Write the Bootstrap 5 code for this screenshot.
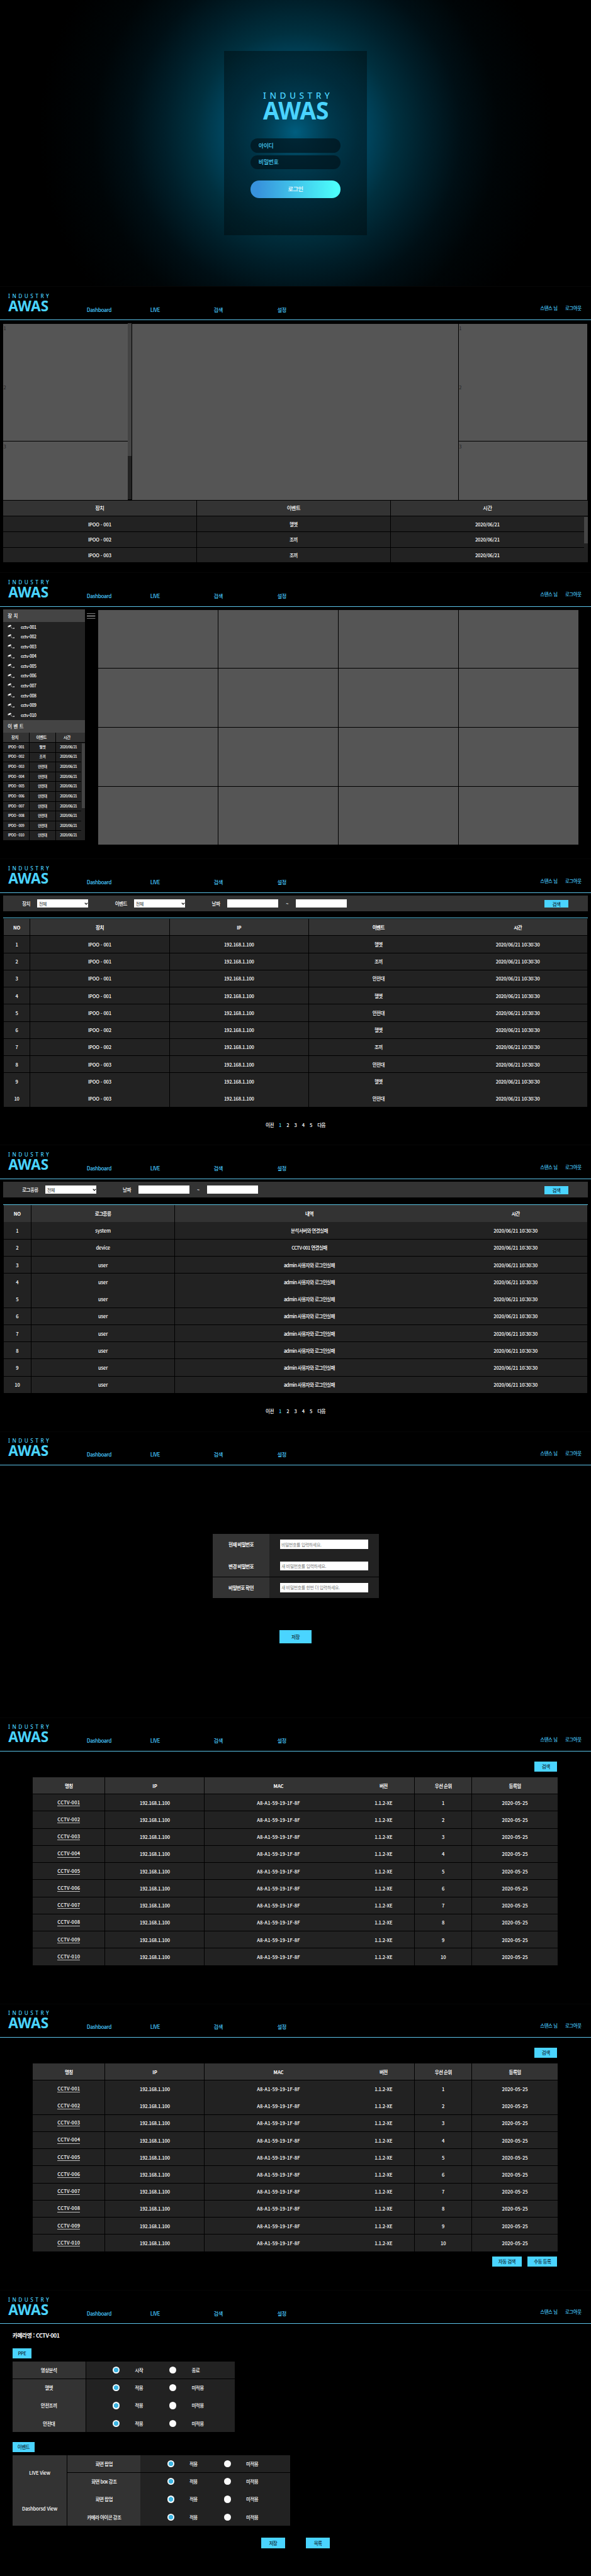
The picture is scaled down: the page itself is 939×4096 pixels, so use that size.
<!DOCTYPE html>
<html lang="ko">
<head>
<meta charset="utf-8">
<meta name="viewport" content="width=device-width, initial-scale=1">
<title>INDUSTRY AWAS</title>
<link href="https://cdn.jsdelivr.net/npm/bootstrap@5.3.0/dist/css/bootstrap.min.css" rel="stylesheet">
<style>
  /* 1rem = 10 design pixels */
  html { font-size: 6.874px; }
  body { margin: 0; background: #000; color: #fff; font-family: "Noto Sans CJK KR", "Noto Sans", sans-serif; font-size: 1.1rem; font-weight: 500; line-height: 1.2; letter-spacing: -.02em; overflow-x: hidden; }
  :root { --sky: #4ad4ff; }
  .ko { letter-spacing: -.075em; }
  .screen { height: 66.208rem; overflow: hidden; background: #000; }
  .screen + .screen { box-shadow: inset 0 1px #060606; }
  .brand-logo { overflow: visible; }
  .brand-logo text { fill: var(--sky); font-family: "Noto Sans", sans-serif; letter-spacing: 0; }

  /* login */
  .login-screen { padding-top: 11.84rem; background: radial-gradient(circle 66rem at 68.3rem 30.6rem, #006d94 0, #00455e 25%, #00303f 35%, #001f2a 46%, #000f15 58%, #000507 71%, #000 90%); }
  .login-card { width: 32.9rem; height: 42.5rem; padding: 9.2rem 6rem 0; background: radial-gradient(circle at 16.5rem 18.8rem, rgba(0,0,0,.14) 0, rgba(0,0,0,.36) 8rem, rgba(0,0,0,.42) 15rem, rgba(0,0,0,.36) 30rem); }
  .login-card .brand-logo { width: 16rem; height: 7rem; margin: 0 0 4rem 2.6rem; }
  .login-field { height: 3.26rem; margin-bottom: .6rem; padding: 0 1.9rem; border: 0; border-radius: 1.8rem; background: rgba(0,20,28,.72); color: var(--sky); font-size: 1.3rem; font-weight: 500; letter-spacing: -.03em; }
  .login-field::placeholder { color: #4ad4ff; opacity: 1; }
  .login-btn { height: 4.07rem; margin-top: 1.95rem; padding: 0; border: 0; border-radius: 2rem; background: linear-gradient(90deg, #3792dc 8%, #4cfdfb 95%); color: #fff; font-size: 1.35rem; font-weight: 500; letter-spacing: -.05em; }

  /* top bar */
  .topbar { height: 7.9rem; border-bottom: .2rem solid #5cc4ea; color: #46c6fb; padding: 0 2.25rem 0 1.95rem; font-size: 1.2rem; letter-spacing: -.05em; }
  .topbar .brand-logo { width: 9.6rem; height: 4.2rem; margin-top: 1.7rem; }
  .topbar .menu { margin: 4.75rem 0 0 8.5rem; }
  .topbar .menu a { width: 14.68rem; color: inherit; text-decoration: none; }
  .topbar .who { margin: 4.55rem 0 0 auto; gap: 1.8rem; font-size: 1.08rem; }

  .cyan-btn { display: flex; align-items: center; justify-content: center; padding: 0; border: 0; border-radius: 0; background: var(--sky); color: #12303a; font-size: 1.1rem; font-weight: 500; letter-spacing: -.07em; line-height: 1; }
  .cell-grid { display: grid; text-align: center; }
  .cell-grid > div { display: flex; align-items: center; justify-content: center; background: #222; white-space: nowrap; }
  .cell-grid > .hd { background: #333; font-weight: 700; }
  .tile { background: #555; color: #222; padding: .35rem 0 0 .1rem; font-size: 1.1rem; font-weight: 400; line-height: 1.2; }
  .thumb { background: #444; }
  .track { background: #222; }

  /* dashboard */
  .dash { margin: .66rem .9rem 0 .7rem; height: 40.8rem; }
  .stack { display: grid; grid-auto-rows: 13.5rem; row-gap: .13rem; padding-top: .12rem; }
  .dash-rows { grid-template-columns: 44.68rem 44.68rem 44.68rem; grid-auto-rows: 3.46rem; gap: .14rem .13rem; }
  .dash-rows > .hd { font-size: 1.2rem; font-weight: 500; letter-spacing: -.05em; }

  /* live */
  .side { width: 18.9rem; margin: .68rem 0 0 .7rem; }
  .side h6 { height: 2.86rem; margin: 0; padding: 0 0 0 1.1rem; background: #444; font-size: 1.08rem; font-weight: 500; letter-spacing: .02em; display: flex; align-items: center; }
  .side ul { height: 22.75rem; background: #222; }
  .side li { height: 2.27rem; padding-left: 1rem; font-size: 1rem; letter-spacing: -.05em; }
  .side li svg { width: 1.6rem; height: 1.1rem; margin-right: 1.5rem; }
  .side-table { font-size: .83rem; letter-spacing: -.06em; grid-template-columns: 6.03rem 5.87rem 5.87rem; gap: .14rem .15rem; grid-auto-rows: 2.133rem; }
  .side-table > .hd { font-weight: 500; }
  .wall { display: grid; grid-template-columns: repeat(4, 27.65rem); grid-auto-rows: 13.47rem; gap: .155rem; margin: .76rem 0 0 .65rem; }
  .burger { width: 1.95rem; margin: 1.53rem 0 0 .5rem; height: 1.3rem; }

  /* search pages */
  .filter { height: 3.66rem; margin: .67rem .8rem 0 .7rem; padding: 0 4.43rem; background: #333; }
  .filter span { flex: none; white-space: nowrap; letter-spacing: -.075em; }
  .filter .form-select, .filter .form-control { flex: none; width: 11.75rem; height: 1.87rem; min-height: 0; padding: 0 .35rem; border: 0; border-radius: 0; background-color: #fff; color: #222; font-size: 1.05rem; line-height: 1.8rem; letter-spacing: -.08em; }
  .filter .form-select { background-image: url("data:image/svg+xml,%3Csvg xmlns='http://www.w3.org/2000/svg' viewBox='0 0 8 8'%3E%3Cpath d='M1 2.2l3 3 3-3' fill='none' stroke='%23111' stroke-width='1.7'/%3E%3C/svg%3E"); background-size: .85rem; background-position: right .05rem center; }
  .filter .cyan-btn { width: 5.55rem; height: 1.8rem; margin-top: .15rem; }
  .list-wrap { margin: 1.47rem .8rem 0 .7rem; border-top: .2rem solid #5cc4e4; padding: .1rem .08rem 0 .17rem; }
  .list-grid { grid-auto-rows: 3.83rem; gap: .135rem .14rem; }
  .pages { margin-top: 3.5rem; gap: 1.18rem; }

  /* password */
  .pw-grid { width: 38.42rem; margin: 15.9rem 0 0 49.13rem; grid-template-columns: 13.16rem 1fr; grid-auto-rows: 4.87rem; row-gap: .11rem; }
  .pw-grid .form-control { width: 20.5rem; height: 2.15rem; min-height: 0; padding: 0 .35rem; border: 0; border-radius: 0; background: #fff; font-size: 1rem; letter-spacing: -.04em; }
  .pw-grid .form-control::placeholder { color: #7c7c7c; opacity: 1; }

  /* camera list */
  .cam-grid { margin: 1.3rem 0 0 7.58rem; grid-template-columns: 16.64rem 22.86rem 34.06rem 14.24rem 13.1rem 19.8rem; grid-auto-rows: 3.825rem; gap: .14rem .13rem; }
  .cam-grid u { text-decoration: none; border-bottom: .12rem solid #bbb; line-height: 1.35; letter-spacing: .03em; }
  .cam-grid s { text-decoration: none; letter-spacing: .02em; }

  /* camera settings */
  .set-grid { grid-auto-rows: 4rem; row-gap: .1rem; }
  .set-grid > .hd { font-weight: 500; }
  .set-grid > .opts { justify-content: flex-start; }
  .dot { width: 1.62rem; height: 1.62rem; border-radius: 50%; background: #fafafa; flex: none; }
  .dot.on { background: radial-gradient(circle closest-side, #3bb5e3 0 62%, #f4fafc 72%); }
  .opts span { width: 8.83rem; padding-left: 3.5rem; flex: none; text-align: left; }
  .opts span + .dot { margin-left: 2.67rem; }
  .opts .dot + span { width: 8.83rem; }
</style>
</head>
<body>

<svg width="0" height="0" class="position-absolute" aria-hidden="true">
  <symbol id="cam" viewBox="0 0 16 11">
    <path d="M.6 3.6 6.6.7 9.2 2.6 3.4 6.2Z" fill="#fff"/><path d="M.4 4.4 2.8 6.5 2 6.9.1 5.3Z" fill="#ccc"/>
    <path d="M7.2 4.2 8.6 7.6 11 9.1H14.6" fill="none" stroke="#bbb" stroke-width="1.1"/><path d="M14 7.2h1.5v3H14z" fill="#fff"/>
  </symbol>
</svg>

<section class="screen login-screen">
  <div class="login-card mx-auto">
    <svg class="brand-logo d-block" viewBox="0 0 160 70">
      <text x="3" y="17.2" font-size="20" font-weight="500" textLength="154" lengthAdjust="spacing">INDUSTRY</text>
      <text x="3" y="65.4" font-size="56" font-weight="700" textLength="152" lengthAdjust="spacingAndGlyphs">AWAS</text>
    </svg>
    <input class="form-control login-field" type="text" placeholder="아이디">
    <input class="form-control login-field" type="password" placeholder="비밀번호">
    <button class="btn login-btn w-100">로그인</button>
  </div>
</section>

<section class="screen">
  <div data-part="topbar"></div>
  <div class="dash d-flex">
    <div class="stack" style="width:28.9rem"><div class="tile">1</div><div class="tile">2</div><div class="tile">3</div></div>
    <div class="track me-0" style="width:.8rem"><div class="thumb" style="height:30.66rem"></div></div>
    <div class="stack" style="width:75.43rem;margin-left:.1rem;grid-auto-rows:40.76rem"><div class="tile"></div></div>
    <div class="stack" style="width:29.73rem;margin-left:.13rem"><div class="tile">1</div><div class="tile">2</div><div class="tile">3</div></div>
  </div>
  <div style="margin:.3rem 0 0 .7rem;width:135.2rem">
    <div class="cell-grid dash-rows" style="grid-template-columns:44.68rem 44.68rem 45.58rem">
      <div class="hd">장치</div><div class="hd">이벤트</div><div class="hd" style="padding-right:.9rem">시간</div>
    </div>
    <div class="d-flex track" style="margin-top:.14rem">
      <div class="cell-grid dash-rows bg-black" data-rows="dash"></div>
      <div style="padding-top:.1rem;width:.9rem"><div class="thumb" style="height:6.2rem"></div></div>
    </div>
  </div>
</section>

<section class="screen">
  <div data-part="topbar"></div>
  <div class="d-flex">
    <aside class="side">
      <h6>장 치</h6>
      <ul class="list-unstyled m-0" data-rows="cams"></ul>
      <h6>이 벤 트</h6>
      <div class="cell-grid side-table" style="grid-template-columns:6.03rem 5.87rem 1fr;grid-auto-rows:2.2rem;font-size:.95rem">
        <div class="hd" style="padding-right:.6rem">장치</div><div class="hd" style="padding-right:.5rem">이벤트</div><div class="hd" style="padding-right:1.55rem">시간</div>
      </div>
      <div class="d-flex track" style="margin-top:.14rem">
        <div class="cell-grid side-table bg-black" data-rows="side"></div>
        <div style="padding:.12rem 0 0 .1rem;width:.85rem"><div class="thumb" style="height:14.95rem"></div></div>
      </div>
    </aside>
    <svg class="burger" viewBox="0 0 19.5 13"><path d="M0 1h19.5M0 12h19.5" stroke="#aaa" stroke-width="1.2"/><path d="M0 6.5h19.5" stroke="#fff" stroke-width="1.3"/></svg>
    <div class="wall" data-rows="wall"></div>
  </div>
</section>

<section class="screen">
  <div data-part="topbar"></div>
  <div class="filter d-flex align-items-center">
    <span style="width:3.5rem">장치</span><select class="form-select"><option>전체</option></select>
    <span style="width:4.45rem;margin-left:6.2rem">이벤트</span><select class="form-select"><option>전체</option></select>
    <span style="width:3.6rem;margin-left:6.2rem">날짜</span><input class="form-control">
    <span class="text-center" style="width:4.1rem">~</span><input class="form-control">
    <button class="cyan-btn ms-auto">검색</button>
  </div>
  <div class="list-wrap"><div class="cell-grid list-grid" data-rows="events" style="grid-template-columns:6rem 1fr 1fr 1fr 1fr"></div></div>
  <div data-part="pages"></div>
</section>

<section class="screen">
  <div data-part="topbar"></div>
  <div class="filter d-flex align-items-center">
    <span style="width:5.4rem">로그종류</span><select class="form-select"><option>전체</option></select>
    <span style="width:3.6rem;margin-left:6.1rem">날짜</span><input class="form-control">
    <span class="text-center" style="width:4.15rem">~</span><input class="form-control">
    <button class="cyan-btn ms-auto">검색</button>
  </div>
  <div class="list-wrap"><div class="cell-grid list-grid" data-rows="logs" style="grid-template-columns:6.25rem 33.1rem 1fr 33.1rem"></div></div>
  <div data-part="pages"></div>
</section>

<section class="screen">
  <div data-part="topbar"></div>
  <div class="cell-grid pw-grid">
    <div class="hd">현재 비밀번호</div><div><input class="form-control" placeholder="비밀번호를 입력하세요."></div>
    <div class="hd">변경 비밀번호</div><div><input class="form-control" placeholder="새 비밀번호를 입력하세요."></div>
    <div class="hd">비밀번호 확인</div><div><input class="form-control" placeholder="새 비밀번호를 한번 더 입력하세요."></div>
  </div>
  <button class="cyan-btn mx-auto" style="width:7.3rem;height:2.95rem;margin-top:7.47rem">저장</button>
</section>

<section class="screen">
  <div data-part="topbar"></div>
  <button class="cyan-btn" style="width:5.3rem;height:2.36rem;margin:2.3rem 0 0 123.5rem">검색</button>
  <div class="cell-grid cam-grid" data-rows="devices"></div>
</section>

<section class="screen">
  <div data-part="topbar"></div>
  <button class="cyan-btn" style="width:5.3rem;height:2.36rem;margin:2.3rem 0 0 123.5rem">검색</button>
  <div class="cell-grid cam-grid" data-rows="devices"></div>
  <div class="d-flex" style="margin:1.15rem 0 0 113.77rem;gap:1.4rem">
    <button class="cyan-btn" style="width:6.8rem;height:2.36rem">자동 검색</button>
    <button class="cyan-btn" style="width:6.8rem;height:2.36rem">수동 등록</button>
  </div>
</section>

<section class="screen">
  <div data-part="topbar"></div>
  <div style="padding-left:2.87rem">
    <div style="font-size:1.28rem;font-weight:700;letter-spacing:-.045em;padding-top:2rem;height:5.65rem">카메라명 : CCTV-001</div>
    <div class="cyan-btn" style="width:4.4rem;height:2.36rem">PPE</div>
    <div class="cell-grid set-grid" data-rows="ppe" style="width:51.35rem;margin-top:.68rem;grid-template-columns:16.85rem 1fr;column-gap:.2rem"></div>
    <div class="cyan-btn" style="width:5.15rem;height:2.4rem;margin-top:2.32rem">이벤트</div>
    <div class="cell-grid set-grid" style="width:64.2rem;margin-top:.68rem;grid-template-columns:12.75rem 16.85rem 1fr;column-gap:0">
      <div class="hd" style="grid-row:span 2;margin-right:.14rem">LIVE View</div>
      <div class="hd">화면 팝업</div><div class="opts" data-opts></div>
      <div class="hd">화면 box 강조</div><div class="opts" data-opts></div>
      <div class="hd" style="grid-row:span 2;margin-right:.14rem">Dashborsd View</div>
      <div class="hd">화면 팝업</div><div class="opts" data-opts></div>
      <div class="hd">카메라 아이콘 강조</div><div class="opts" data-opts></div>
    </div>
  </div>
  <div class="d-flex justify-content-center" style="gap:4.8rem;margin-top:2.85rem">
    <button class="cyan-btn" style="width:5.57rem;height:2.36rem">저장</button>
    <button class="cyan-btn" style="width:5.57rem;height:2.36rem">목록</button>
  </div>
</section>

<script src="https://cdn.jsdelivr.net/npm/bootstrap@5.3.0/dist/js/bootstrap.bundle.min.js"></script>
<script>
  const parts = {
    topbar: `<header class="topbar d-flex">
      <svg class="brand-logo" viewBox="0 0 96 42">
        <text x="0" y="10.7" font-size="12" font-weight="500" textLength="94.5" lengthAdjust="spacing">INDUSTRY</text>
        <text x="0.5" y="40.4" font-size="33" font-weight="700" textLength="93" lengthAdjust="spacingAndGlyphs">AWAS</text>
      </svg>
      <nav class="menu d-flex"><a>Dashboard</a><a>LIVE</a><a>검색</a><a>설정</a></nav>
      <div class="who d-flex"><span>스탠스 님</span><span>로그아웃</span></div>
    </header>`,
    pages: `<div class="pages d-flex justify-content-center"><span class="ko">이전</span><span style="color:var(--sky)">1</span><span>2</span><span>3</span><span>4</span><span>5</span><span class="ko">다음</span></div>`
  };
  document.querySelectorAll('[data-part]').forEach(e => e.outerHTML = parts[e.dataset.part]);

  const cells = (list, cls = '') => list.map(t => `<div class="${cls}">${t}</div>`).join('');
  const seq = Array.from({ length: 10 }, (_, i) => i + 1);
  const p3 = n => String(n).padStart(3, '0');
  const opts = (a, b) => `<i class="dot on"></i><span>${a}</span><i class="dot"></i><span>${b}</span>`;
  const H = '헬멧', V = '조끼', B = '안전대';
  const ev = [[1, H], [1, V], [1, B], [1, H], [1, B], [2, H], [2, V], [3, B], [3, H], [3, B]];
  const log = n => n === 1 ? ['system', '분석서버와 연결실패'] : n === 2 ? ['device', 'CCTV-001 연결실패'] : ['user', 'admin 사용자와 로그인실패'];
  const time = '2020/06/21 10:30:30';

  const rows = {
    dash: cells(['IPOO - 001', H, '2020/06/21', 'IPOO - 002', V, '2020/06/21', 'IPOO - 003', V, '2020/06/21']),
    cams: seq.map(n => `<li class="d-flex align-items-center"><svg><use href="#cam"/></svg>cctv-${p3(n)}</li>`).join(''),
    side: seq.map(n => cells(['IPOO - ' + p3(n), n === 1 ? H : n === 2 ? V : B, '2020/06/21'])).join(''),
    wall: '<div class="tile"></div>'.repeat(16),
    events: cells(['NO', '장치', 'IP', '이벤트', '시간'], 'hd') + ev.map((e, i) => cells([i + 1, 'IPOO - ' + p3(e[0]), '192.168.1.100', e[1], time])).join(''),
    logs: cells(['NO', '로그종류', '내역', '시간'], 'hd') + seq.map(n => cells([n, ...log(n), time])).join(''),
    devices: cells(['명칭', 'IP', 'MAC', '버전', '우선 순위', '등록일'], 'hd') +
      seq.map(n => cells([`<u>CCTV-${p3(n)}</u>`, '192.168.1.100', '<s>A8-A1-59-19-1F-8F</s>', '1.1.2-XE', n, '<s>2020-05-25</s>'])).join(''),
    ppe: [['영상분석', '시작', '종료'], [H, '적용', '미적용'], ['안전조끼', '적용', '미적용'], [B, '적용', '미적용']]
      .map(r => `<div class="hd">${r[0]}</div><div class="opts" style="padding-left:6.15rem">${opts(r[1], r[2])}</div>`).join('')
  };
  document.querySelectorAll('[data-rows]').forEach(e => e.innerHTML = rows[e.dataset.rows]);
  document.querySelectorAll('[data-opts]').forEach(e => { e.innerHTML = opts('적용', '미적용'); e.style.paddingLeft = '6.2rem'; });
  // Hangul labels are set tighter than Latin ones
  document.querySelectorAll('.cell-grid > div').forEach(e => { if (/[가-힣]/.test(e.textContent)) e.classList.add('ko'); });
</script>
</body>
</html>
